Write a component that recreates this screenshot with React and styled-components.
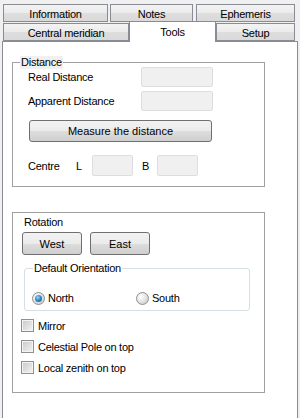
import React from 'react';
import styled, { createGlobalStyle } from 'styled-components';

const GlobalStyle = createGlobalStyle`
  body {
    margin: 0;
    background: #f0f0f0;
    font-family: "Liberation Sans", Arial, sans-serif;
    font-size: 11px;
    letter-spacing: -0.25px;
    color: #000;
  }
`;

const Frame = styled.div`
  width: 300px;
  height: 418px;
  overflow: hidden;
  background: #f0f0f0;
`;

const TabRow = styled.div`
  display: flex;
  height: 18px;
  padding-left: 3px;
  margin-top: ${(p) => p.top}px;
`;

const Tab = styled.div`
  position: relative;
  z-index: 2;
  box-sizing: border-box;
  width: ${(p) => p.w}px;
  margin-right: ${(p) => p.mr || 0}px;
  height: ${(p) => (p.active ? 21 : 18)}px;
  margin-top: ${(p) => (p.active ? -2 : 0)}px;
  display: flex;
  align-items: center;
  justify-content: center;
  padding-top: ${(p) => (p.active ? 0 : 1)}px;
  border: 1px solid #898c95;
  border-bottom: ${(p) => (p.active ? 'none' : '1px solid #898c95')};
  background: ${(p) =>
    p.active ? '#ffffff' : 'linear-gradient(#f3f3f3 0%, #ebebeb 50%, #dedede 51%, #d9d9d9 100%)'};
`;

const Panel = styled.div`
  box-sizing: border-box;
  margin-left: 2px;
  width: 296px;
  height: 377px;
  border: 1px solid #898c95;
  border-bottom: none;
  background: #ffffff;
  padding: 20px 0 0 9px;
`;

const GroupBox = styled.div`
  position: relative;
  box-sizing: border-box;
  width: 253px;
  height: 125px;
  border: 1px solid #a0a0a0;
  padding: 4px 0 0 0;
`;

const Legend = styled.span`
  position: absolute;
  top: -7px;
  left: ${(p) => p.left}px;
  padding: 0 1px;
  line-height: 13px;
  background: ${(p) => p.bg};
`;

const FieldRow = styled.div`
  display: flex;
  align-items: center;
  height: 20px;
  padding-left: 15px;
  margin-bottom: 4px;
`;

const FieldLabel = styled.span`
  width: ${(p) => p.w}px;
`;

const Box = styled.div`
  box-sizing: border-box;
  width: ${(p) => p.w}px;
  height: ${(p) => p.h}px;
  background: #f0f0f0;
  border: 1px solid #dedede;
  border-radius: 2px;
`;

const Button = styled.button`
  box-sizing: border-box;
  width: ${(p) => p.w}px;
  height: ${(p) => p.h}px;
  margin-left: ${(p) => p.ml || 0}px;
  border: 1px solid #707070;
  border-radius: 3px;
  background: linear-gradient(#f2f2f2 0%, #ebebeb 50%, #dddddd 51%, #cfcfcf 100%);
  font: inherit;
  color: #000;
  padding: 0;
`;

const CentreRow = styled.div`
  display: flex;
  align-items: center;
  height: 21px;
  padding-left: 15px;
  margin-top: 13px;
`;

const RotationPanel = styled.div`
  box-sizing: border-box;
  width: 253px;
  height: 181px;
  margin-top: 25px;
  border: 1px solid #a0a0a0;
  padding-top: 3px;
`;

const Caption = styled.div`
  line-height: 13px;
  padding-left: 11px;
`;

const ButtonRow = styled.div`
  display: flex;
  gap: 8px;
  padding-left: 9px;
  margin-top: 3px;
`;

const Orientation = styled.div`
  position: relative;
  box-sizing: border-box;
  width: 226px;
  height: 43px;
  margin: 13px 0 0 11px;
  border: 1px solid #d5dfe5;
  border-radius: 3px;
  padding: 17px 0 0 7px;
  display: flex;
`;

const RadioItem = styled.label`
  display: flex;
  align-items: center;
  width: ${(p) => p.w}px;
  gap: 3px;
`;

const RadioDot = styled.span`
  position: relative;
  box-sizing: border-box;
  width: 13px;
  height: 13px;
  border-radius: 50%;
  border: 1px solid #8e8f8f;
  background: radial-gradient(circle at 35% 35%, #ffffff 0%, #e6e6e6 45%, #c4c4c4 100%);

  &::after {
    content: '';
    display: ${(p) => (p.checked ? 'block' : 'none')};
    position: absolute;
    left: 2px;
    top: 2px;
    width: 7px;
    height: 7px;
    border-radius: 50%;
    background: radial-gradient(circle at 40% 35%, #9fd9f8 0%, #2d8ed0 45%, #0b4f86 100%);
  }
`;

const CheckList = styled.div`
  display: flex;
  flex-direction: column;
  gap: 8px;
  margin-top: 8px;
  padding-left: 8px;
`;

const CheckItem = styled.label`
  display: flex;
  align-items: center;
  height: 13px;
  gap: 4px;
`;

const CheckBox = styled.span`
  box-sizing: border-box;
  width: 13px;
  height: 13px;
  border: 1px solid #8e8f8f;
  box-shadow: inset 0 0 0 1px #f4f4f4;
  background: linear-gradient(135deg, #c9c9c9 0%, #e2e2e2 60%, #f6f6f6 100%);
`;

export default function App() {
  return (
    <Frame>
      <GlobalStyle />
      <TabRow top={4}>
        <Tab w={105} mr={2}>Information</Tab>
        <Tab w={83} mr={3}>Notes</Tab>
        <Tab w={99}>Ephemeris</Tab>
      </TabRow>
      <TabRow top={1}>
        <Tab w={126}>Central meridian</Tab>
        <Tab w={87} active>Tools</Tab>
        <Tab w={79}>Setup</Tab>
      </TabRow>
      <Panel>
        <GroupBox>
          <Legend left={7} bg="#f0f0f0">Distance</Legend>
          <FieldRow>
            <FieldLabel w={113}>Real Distance</FieldLabel>
            <Box w={72} h={20} />
          </FieldRow>
          <FieldRow>
            <FieldLabel w={113}>Apparent Distance</FieldLabel>
            <Box w={72} h={20} />
          </FieldRow>
          <Button w={183} h={22} ml={16} style={{ marginTop: 5 }}>
            Measure the distance
          </Button>
          <CentreRow>
            <FieldLabel w={48}>Centre</FieldLabel>
            <FieldLabel w={16}>L</FieldLabel>
            <Box w={41} h={21} />
            <FieldLabel w={15} style={{ marginLeft: 9 }}>B</FieldLabel>
            <Box w={41} h={21} />
          </CentreRow>
        </GroupBox>

        <RotationPanel>
          <Caption>Rotation</Caption>
          <ButtonRow>
            <Button w={60} h={23}>West</Button>
            <Button w={60} h={23}>East</Button>
          </ButtonRow>
          <Orientation>
            <Legend left={8} bg="#ffffff">Default Orientation</Legend>
            <RadioItem w={104}>
              <RadioDot checked />
              North
            </RadioItem>
            <RadioItem w={80}>
              <RadioDot />
              South
            </RadioItem>
          </Orientation>
          <CheckList>
            <CheckItem><CheckBox />Mirror</CheckItem>
            <CheckItem><CheckBox />Celestial Pole on top</CheckItem>
            <CheckItem><CheckBox />Local zenith on top</CheckItem>
          </CheckList>
        </RotationPanel>
      </Panel>
    </Frame>
  );
}
